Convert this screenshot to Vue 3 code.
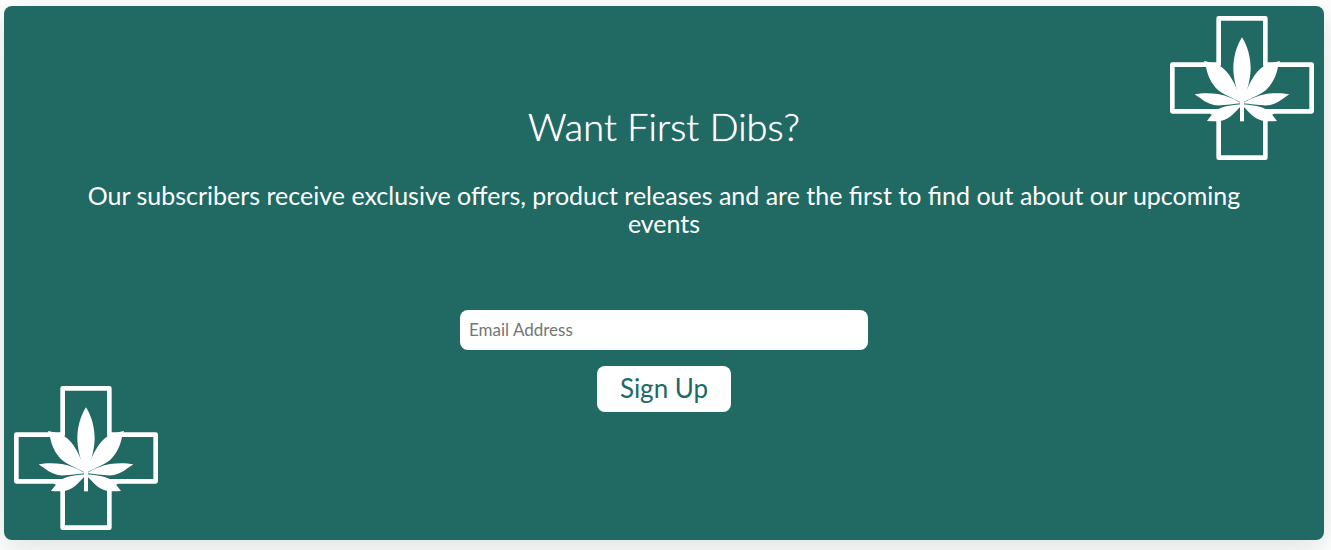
<script setup>
import { ref } from 'vue'

const email = ref('')
const corners = ['top', 'bottom']
</script>

<template>
  <main class="page">
    <section class="card">
      <svg
        v-for="corner in corners"
        :key="corner"
        class="emblem"
        :class="corner"
        viewBox="0 0 432 432"
        aria-hidden="true"
      >
        <path
          class="cross"
          d="M146 7H286V146H425V286H286V425H146V286H7V146H146Z"
        />
        <g class="leaf">
          <path d="M216 64C200 88 190 124 190 156C190 188 200 222 210 250L213 262H219L222 250C232 222 242 188 242 156C242 124 232 88 216 64Z" />
          <path d="M102 135C122 140 144 143 161 158C186 180 203 222 212 249L214 260L206 256C190 246 160 236 143 221C123 202 113 178 108 153Z" />
          <path d="M330 135C310 140 288 143 271 158C246 180 229 222 220 249L218 260L226 256C242 246 272 236 289 221C309 202 319 178 324 153Z" />
          <path d="M74 235C92 231 118 230 144 234C170 239 196 250 213 262C192 264 164 269 136 268C110 264 94 248 74 235Z" />
          <path d="M358 235C340 231 314 230 288 234C262 239 236 250 219 262C240 264 268 269 296 268C322 264 338 248 358 235Z" />
          <path d="M215 265C192 266 162 271 145 279C137 287 130 291 118 293L126 296C119 303 116 309 111 315C132 316 150 317 164 311C186 302 200 284 215 267Z" />
          <path d="M217 265C240 266 270 271 287 279C295 287 302 291 314 293L306 296C313 303 316 309 321 315C300 316 282 317 268 311C246 302 232 284 217 267Z" />
          <path d="M210 258H222V316H210Z" />
        </g>
      </svg>

      <h2 class="title">Want First Dibs?</h2>
      <p class="lead">
        Our subscribers receive exclusive offers, product releases and are the first to find out about our upcoming events
      </p>
      <form class="signup" @submit.prevent>
        <input
          v-model="email"
          class="email"
          type="email"
          placeholder="Email Address"
          aria-label="Email Address"
        />
        <button class="submit" type="submit">Sign Up</button>
      </form>
    </section>
  </main>
</template>

<style>
body {
  background: #fff;
}
</style>

<style scoped>
.page {
  box-sizing: border-box;
  min-height: 100vh;
  padding: 6px 7px 10px 4px;
  display: flex;
  overflow: hidden;
  font-family: Lato, "Open Sans", sans-serif;
}

.card {
  position: relative;
  flex: 1;
  box-sizing: border-box;
  padding: 96px 64px;
  display: flex;
  flex-direction: column;
  align-items: center;
  border-radius: 8px;
  background: #216963;
  box-shadow: 0 8px 32px rgba(33, 66, 50, 0.16);
  color: #fff;
}

.emblem {
  position: absolute;
  width: 144px;
  height: 144px;
}

.top {
  top: 10px;
  right: 10px;
}

.bottom {
  bottom: 10px;
  left: 10px;
}

.cross {
  fill: none;
  stroke: #fff;
  stroke-width: 14;
  stroke-linejoin: round;
}

.leaf {
  fill: #fff;
}

.title {
  margin: 0;
  font-size: 38px;
  font-weight: 300;
  line-height: 48px;
  text-shadow: 0 0 1px #fff;
}

.lead {
  margin: 31px 0 0;
  font-size: 25px;
  font-weight: 400;
  line-height: 28px;
  text-align: center;
}

.signup {
  width: 100%;
  margin-top: 73px;
  display: flex;
  flex-direction: column;
  align-items: center;
  gap: 16px;
}

.email {
  box-sizing: border-box;
  width: 408px;
  max-width: 100%;
  height: 40px;
  padding: 0 9px 2px;
  border: 0;
  border-radius: 8px;
  background: #fff;
  color: #333;
  font-family: inherit;
  font-size: 17px;
}

.email::placeholder {
  color: #757575;
}

.submit {
  height: 46px;
  padding: 0 23px 2px;
  border: 0;
  border-radius: 8px;
  background: #fff;
  color: #216963;
  font-family: inherit;
  font-size: 26px;
}
</style>
